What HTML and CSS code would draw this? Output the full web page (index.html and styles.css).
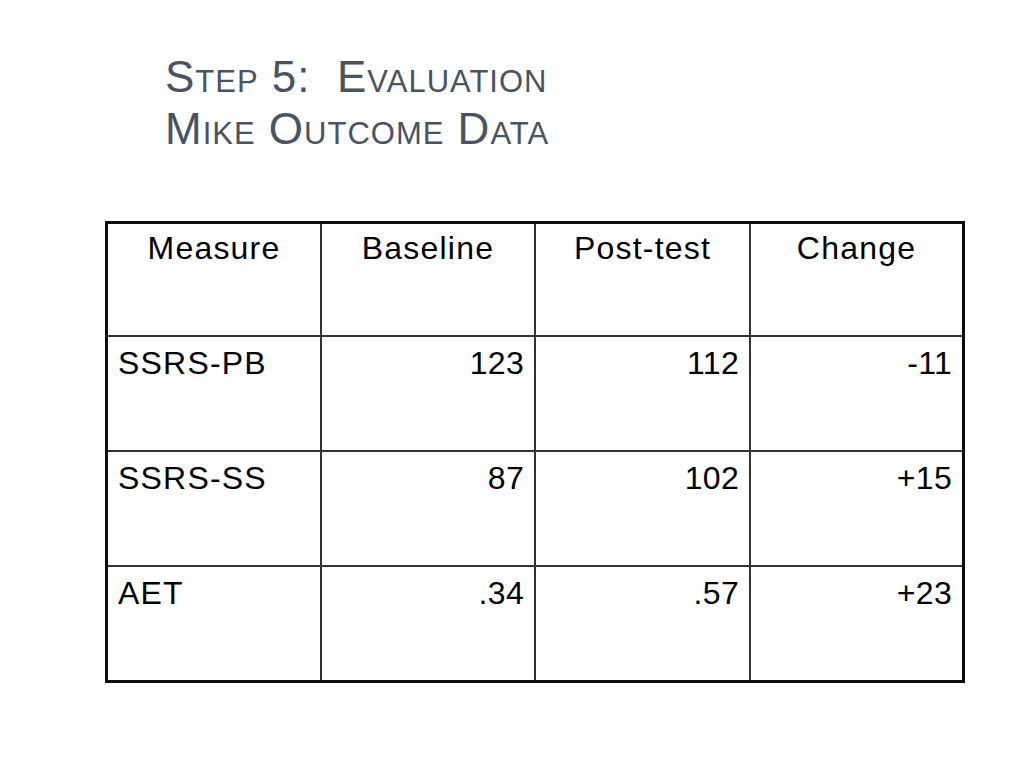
FILE: index.html
```html
<!DOCTYPE html>
<html>
<head>
<meta charset="utf-8">
<link rel="stylesheet" href="styles.css">
</head>
<body>
<div class="slide">
  <h1 class="title">
    <span class="line">Step 5:&nbsp; Evaluation</span>
    <span class="line">Mike Outcome Data</span>
  </h1>
  <table class="data">
    <colgroup>
      <col class="c1"><col class="c2"><col class="c3"><col class="c4">
    </colgroup>
    <tr class="head">
      <td>Measure</td><td>Baseline</td><td>Post-test</td><td class="last">Change</td>
    </tr>
    <tr>
      <td class="lbl">SSRS-PB</td><td class="num">123</td><td class="num">112</td><td class="num last">-11</td>
    </tr>
    <tr>
      <td class="lbl">SSRS-SS</td><td class="num">87</td><td class="num">102</td><td class="num last">+15</td>
    </tr>
    <tr class="end">
      <td class="lbl">AET</td><td class="num">.34</td><td class="num">.57</td><td class="num last">+23</td>
    </tr>
  </table>
</div>
</body>
</html>
```

FILE: styles.css
```css
html, body {
  margin: 0;
  padding: 0;
  background: #ffffff;
}
.slide {
  width: 1024px;
  height: 768px;
  position: relative;
  overflow: hidden;
  font-family: "Liberation Sans", Arial, sans-serif;
}
.title {
  margin: 0;
  padding: 51px 0 0 165px;
  font-size: 44px;
  line-height: 52px;
  letter-spacing: 1px;
  font-weight: normal;
  font-variant: small-caps;
  color: #4a5361;
}
.title .line {
  display: block;
  white-space: nowrap;
}
.data {
  margin: 66px 0 0 105px;
  width: 860px;
  table-layout: fixed;
  border-collapse: separate;
  border-spacing: 0;
  border: 3px solid #0d0d0d;
  font-size: 32px;
  line-height: 37px;
  letter-spacing: 1.2px;
  color: #000;
}
.c1 { width: 214px; }
.c2 { width: 214px; }
.c3 { width: 215px; }
.c4 { width: 211px; }
.data td {
  vertical-align: top;
  padding: 8px 10px 0 10px;
  border-right: 2px solid #333;
  border-bottom: 2px solid #333;
  box-sizing: border-box;
  height: 115px;
}
.data tr.head td {
  text-align: center;
  padding-top: 6px;
  height: 113px;
}
.data tr.end td { border-bottom: none; height: 113px; }
.data td.last { border-right: none; }
.data td.num {
  text-align: right;
  letter-spacing: 0.3px;
  padding-right: 10px;
}
.data td.lbl { text-align: left; }
```
